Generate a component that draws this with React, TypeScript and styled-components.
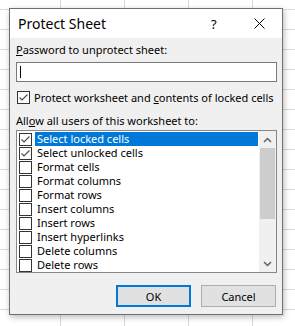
import { FunctionComponent, ReactNode } from 'react';
import styled, { createGlobalStyle } from 'styled-components';

const GlobalStyle = createGlobalStyle`
  html, body {
    margin: 0;
    height: 100%;
  }
  body {
    background-color: #ffffff;
    background-image:
      linear-gradient(to right, #dadada 1px, transparent 1px),
      linear-gradient(to bottom, #dadada 1px, transparent 1px);
    background-size: 64px 20px;
    background-position: 60px 9px;
    font-family: 'Noto Sans', 'Liberation Sans', sans-serif;
    font-size: 11px;
    color: #000;
    white-space: nowrap;
  }
`;

const items = [
  { label: 'Select locked cells', checked: true },
  { label: 'Select unlocked cells', checked: true },
  { label: 'Format cells', checked: false },
  { label: 'Format columns', checked: false },
  { label: 'Format rows', checked: false },
  { label: 'Insert columns', checked: false },
  { label: 'Insert rows', checked: false },
  { label: 'Insert hyperlinks', checked: false },
  { label: 'Delete columns', checked: false },
  { label: 'Delete rows', checked: false },
];

const CheckBox: FunctionComponent<{ checked: boolean }> = ({ checked }) => (
  <Box>
    {checked && (
      <svg width="11" height="11" viewBox="0 0 11 11">
        <polyline
          points="1.5,5.5 4,8 9.5,2.5"
          fill="none"
          stroke="#4a4a4a"
          strokeWidth="1.1"
        />
      </svg>
    )}
  </Box>
);

const Chevron: FunctionComponent<{ down?: boolean }> = ({ down }) => (
  <svg width="9" height="6" viewBox="0 0 9 6">
    <polyline
      points={down ? '1,1 4.5,4.5 8,1' : '1,5 4.5,1.5 8,5'}
      fill="none"
      stroke="#606060"
      strokeWidth="1.5"
    />
  </svg>
);

const Key: FunctionComponent<{ children: ReactNode }> = ({ children }) => (
  <u>{children}</u>
);

export default function App() {
  return (
    <>
      <GlobalStyle />
      <Desktop>
        <Dialog>
          <TitleBar>
            <Title>Protect Sheet</Title>
            <Help>?</Help>
            <Close>
              <svg width="11" height="11" viewBox="0 0 11 11">
                <path d="M0.5,0.5 L10.5,10.5 M10.5,0.5 L0.5,10.5" stroke="#000" strokeWidth="1" />
              </svg>
            </Close>
          </TitleBar>
          <Body>
            <Label>
              <Key>P</Key>assword to unprotect sheet:
            </Label>
            <PasswordInput>
              <Caret />
            </PasswordInput>
            <CheckRow>
              <CheckBox checked />
              <span>
                Protect worksheet and <Key>c</Key>ontents of locked cells
              </span>
            </CheckRow>
            <Label $gap={8}>
              All<Key>o</Key>w all users of this worksheet to:
            </Label>
            <List>
              <Rows>
                {items.map((item, i) => (
                  <Row key={item.label}>
                    <CheckBox checked={item.checked} />
                    <RowText $selected={i === 0}>{item.label}</RowText>
                  </Row>
                ))}
              </Rows>
              <ScrollBar>
                <Arrow>
                  <Chevron />
                </Arrow>
                <Thumb />
                <Track />
                <Arrow>
                  <Chevron down />
                </Arrow>
              </ScrollBar>
            </List>
            <Buttons>
              <Button $primary>OK</Button>
              <Button>Cancel</Button>
            </Buttons>
          </Body>
        </Dialog>
      </Desktop>
    </>
  );
}

const Desktop = styled.div`
  padding: 8px 0 0 9px;
`;
const Dialog = styled.div`
  width: 274px;
  height: 307px;
  box-sizing: border-box;
  border: 1px solid #707070;
  background: #f0f0f0;
  box-shadow: 1px 2px 6px rgba(0, 0, 0, 0.28);
  display: flex;
  flex-direction: column;
`;
const TitleBar = styled.div`
  height: 29px;
  background: #fff;
  display: flex;
  align-items: center;
  padding-left: 8px;
`;
const Title = styled.div`
  flex: 1;
  font-size: 14px;
  line-height: 16px;
`;
const Help = styled.div`
  width: 12px;
  margin-right: 31px;
  font-size: 13px;
  line-height: 16px;
`;
const Close = styled.div`
  width: 11px;
  height: 11px;
  margin-right: 17px;
  display: flex;
`;
const Body = styled.div`
  flex: 1;
  padding: 4px 5px 0 6px;
  display: flex;
  flex-direction: column;
`;
const Label = styled.div<{ $gap?: number }>`
  line-height: 16px;
  margin-top: ${(p) => p.$gap ?? 0}px;
`;
const PasswordInput = styled.div`
  margin-top: 4px;
  height: 20px;
  box-sizing: border-box;
  border: 1px solid #7a7a7a;
  background: #fff;
  display: flex;
  align-items: center;
  padding-left: 3px;
`;
const Caret = styled.div`
  width: 1px;
  height: 12px;
  background: #000;
`;
const CheckRow = styled.div`
  margin-top: 7px;
  height: 16px;
  display: flex;
  align-items: center;
  gap: 4px;
  padding-left: 1px;
`;
const Box = styled.div`
  width: 13px;
  height: 13px;
  box-sizing: border-box;
  border: 1px solid #333;
  background: #fff;
  flex: none;
  display: flex;
`;
const List = styled.div`
  margin-top: 1px;
  height: 143px;
  box-sizing: border-box;
  border: 1px solid #828790;
  background: #fff;
  display: flex;
  overflow: hidden;
`;
const Rows = styled.div`
  flex: 1;
  padding-top: 1px;
  padding-left: 2px;
  padding-right: 1px;
  overflow: hidden;
`;
const Row = styled.div`
  height: 14px;
  display: flex;
  align-items: center;
  gap: 3px;
`;
const RowText = styled.div<{ $selected?: boolean }>`
  flex: 1;
  height: 14px;
  line-height: 14px;
  padding-left: 2px;
  background: ${(p) => (p.$selected ? '#0078d7' : 'transparent')};
  color: ${(p) => (p.$selected ? '#fff' : '#000')};
`;
const ScrollBar = styled.div`
  width: 17px;
  background: #f0f0f0;
  display: flex;
  flex-direction: column;
`;
const Arrow = styled.div`
  height: 17px;
  display: flex;
  align-items: center;
  justify-content: center;
`;
const Thumb = styled.div`
  height: 71px;
  margin: 0 1px;
  background: #cdcdcd;
`;
const Track = styled.div`
  flex: 1;
`;
const Buttons = styled.div`
  margin-top: 12px;
  display: flex;
  justify-content: flex-end;
  gap: 10px;
  padding-right: 1px;
`;
const Button = styled.div<{ $primary?: boolean }>`
  width: 75px;
  height: 22px;
  box-sizing: border-box;
  border: ${(p) => (p.$primary ? '2px solid #0078d7' : '1px solid #adadad')};
  background: #e1e1e1;
  display: flex;
  align-items: center;
  justify-content: center;
`;
